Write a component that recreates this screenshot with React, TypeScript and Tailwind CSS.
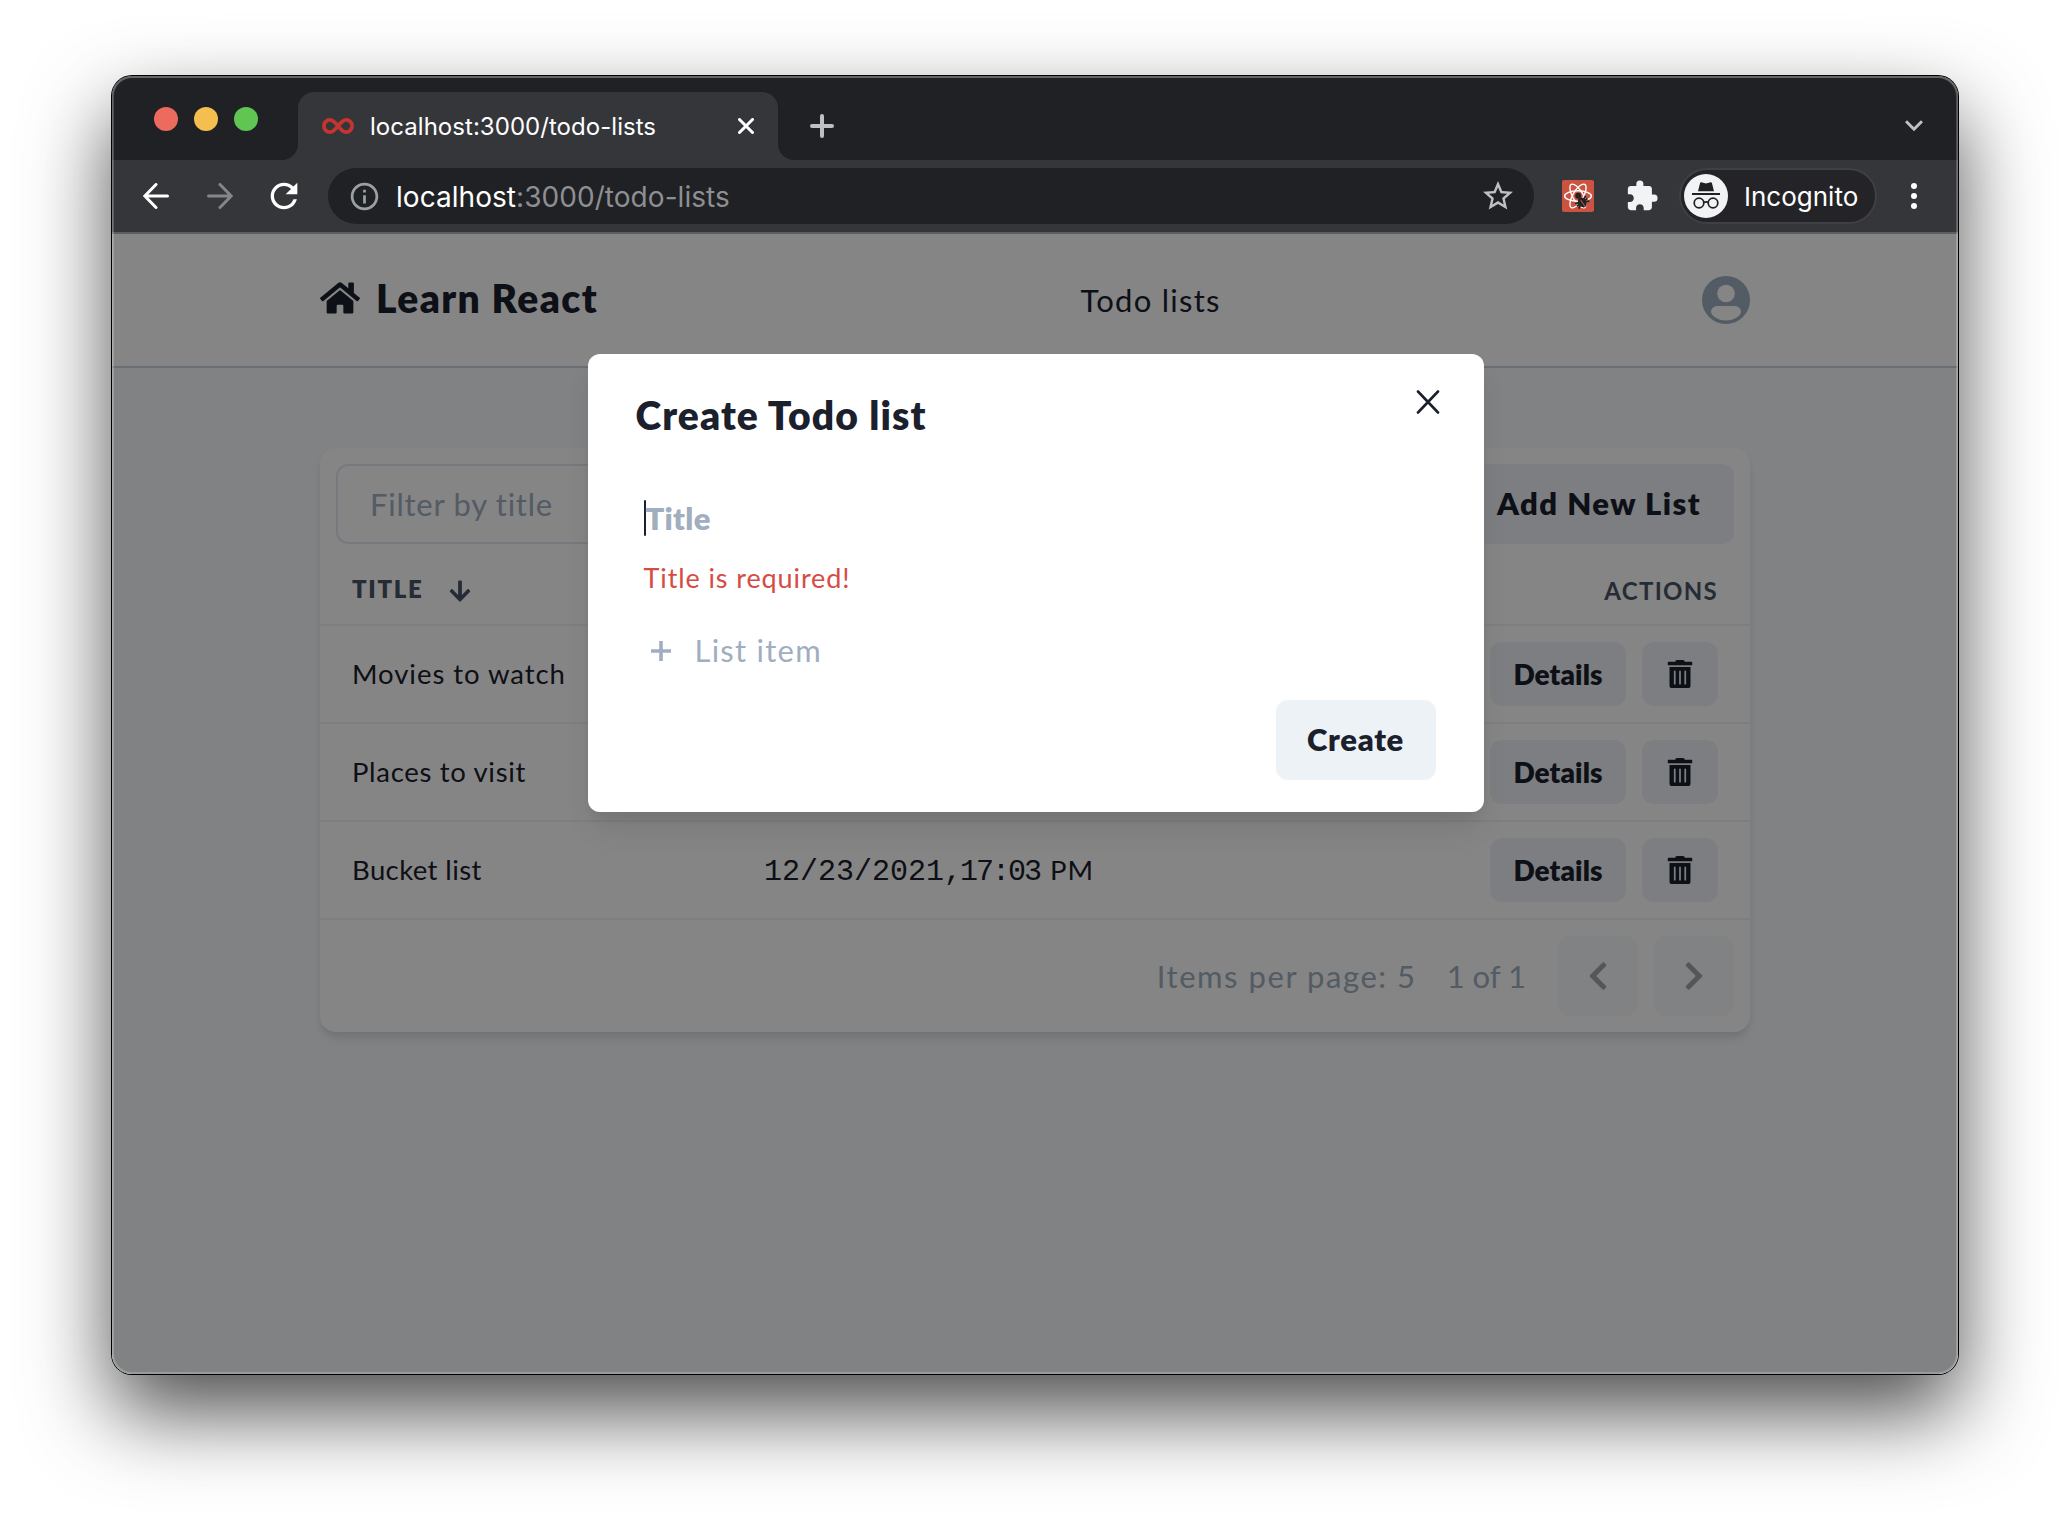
import type { ReactNode } from "react";
import { FaArrowDown, FaChevronLeft, FaChevronRight, FaHome, FaTrashAlt } from "react-icons/fa";
import { MdExtension, MdInfoOutline, MdRefresh, MdStarBorder } from "react-icons/md";

function TrafficLights() {
  return (
    <div className="flex gap-4">
      <span className="size-6 rounded-full bg-[#ec6a5e]" />
      <span className="size-6 rounded-full bg-[#f4bf4f]" />
      <span className="size-6 rounded-full bg-[#61c554]" />
    </div>
  );
}

function TabStrip() {
  return (
    <div className="flex h-[84px] bg-[#35363a]">
      <div className="w-[186px] rounded-br-2xl bg-[#202124] pl-[42px] pt-[31px]">
        <TrafficLights />
      </div>
      <div className="w-[480px] bg-[#202124] pt-4">
        <div className="flex h-[68px] items-center rounded-t-2xl bg-[#35363a] pl-6 pr-6">
          <svg width="32" height="16" viewBox="0 0 32 16" fill="none" stroke="#c5352f" strokeWidth="3.8">
            <path d="M16 8C13.200 4.600 11.200 1.900 8 1.900a6.100 6.100 0 0 0 0 12.200c3.200 0 5.200-2.700 8-6.100s4.800-6.100 8-6.100a6.100 6.100 0 0 1 0 12.200c-3.200 0-5.200-2.700-8-6.100z" />
          </svg>
          <span className="ml-[16px] mt-px text-2xl leading-none tracking-[0.04px] text-white">localhost:3000/todo-lists</span>
          <svg className="ml-auto" width="16" height="16" viewBox="0 0 16 16" stroke="#fff" strokeWidth="3" strokeLinecap="round">
            <path d="M1.5 1.5l13 13M14.5 1.5l-13 13" />
          </svg>
        </div>
      </div>
      <div className="flex flex-1 items-center justify-between rounded-bl-2xl bg-[#202124] pl-8 pr-[35px] pt-4">
        <svg width="24" height="24" viewBox="0 0 24 24" stroke="#bdc1c6" strokeWidth="4" strokeLinecap="round">
          <path d="M12 2v20M2 12h20" />
        </svg>
        <svg width="18" height="12" viewBox="0 0 18 12" fill="none" stroke="#bdc1c6" strokeWidth="3">
          <path d="M1 1.2l8 8 8-8" />
        </svg>
      </div>
    </div>
  );
}

function DevtoolsIcon() {
  return (
    <svg width="32" height="32" viewBox="0 0 32 32" fill="none">
      <rect width="32" height="32" rx="2" fill="#cb5340" />
      <g stroke="#fff" strokeWidth="1.4">
        <ellipse cx="16" cy="16" rx="13.4" ry="5.2" />
        <ellipse cx="16" cy="16" rx="13.4" ry="5.2" transform="rotate(60 16 16)" />
        <ellipse cx="16" cy="16" rx="13.4" ry="5.2" transform="rotate(120 16 16)" />
      </g>
      <circle cx="16.200" cy="15.800" r="3" fill="#222" />
      <g transform="rotate(-35 20 22)">
        <ellipse cx="20" cy="22.500" rx="3.900" ry="5.400" fill="#222" />
        <path d="M13.500 19l13 6.500M26.500 19l-13 6.500M13.500 22.300h13" stroke="#222" strokeWidth="1.800" />
        <path d="M20 19.500v8.500" stroke="#cb5340" strokeWidth="1" />
      </g>
    </svg>
  );
}

function IncognitoAvatar() {
  return (
    <svg width="44" height="44" viewBox="0 0 44 44" fill="none">
      <circle cx="22" cy="22" r="22" fill="#f1f3f4" />
      <path d="M17.3 8.2l4.7 1.3 4.7-1.3c.6-.1 1 .2 1.200.7l2.100 8.400H14l2.100-8.400c.2-.5.6-.8 1.200-.7z" fill="#202124" />
      <path d="M8 20h28" stroke="#202124" strokeWidth="1.800" />
      <circle cx="15" cy="29" r="4.800" stroke="#202124" strokeWidth="1.700" />
      <circle cx="29" cy="29" r="4.800" stroke="#202124" strokeWidth="1.700" />
      <path d="M19.800 28.500q2.200-1.400 4.400 0" stroke="#202124" strokeWidth="1.700" />
    </svg>
  );
}

function Toolbar() {
  return (
    <div className="flex h-[74px] items-center border-b-2 border-[#5d5e62] bg-[#35363a] pl-[31px] pr-[41px]">
      <svg width="26" height="26" viewBox="0 0 26 26" fill="none" stroke="#fff" strokeWidth="3" strokeLinecap="round">
        <path d="M24.500 13H2M13 1.500L1.800 13 13 24.500" />
      </svg>
      <svg className="ml-[38px]" width="26" height="26" viewBox="0 0 26 26" fill="none" stroke="#85868a" strokeWidth="3" strokeLinecap="round">
        <path d="M1.500 13H24M13 1.500L24.200 13 13 24.500" />
      </svg>
      <MdRefresh size={40} className="ml-[31px] text-white" />
      <div className="ml-6 flex h-14 w-[1206px] items-center rounded-full bg-[#202124] pl-5 pr-[18px]">
        <MdInfoOutline size={33} className="text-[#9aa0a6]" />
        <span className="ml-[15px] mt-px text-[28px] leading-none tracking-[0.05px] text-[#8e8f92]">
          <span className="text-white">localhost</span>:3000/todo-lists
        </span>
        <MdStarBorder size={36} className="ml-auto text-[#bdc1c6]" />
      </div>
      <div className="ml-7">
        <DevtoolsIcon />
      </div>
      <MdExtension size={34} className="ml-[31px] text-[#f1f3f4]" />
      <div className="ml-[20px] flex h-14 w-[198px] items-center rounded-full border-2 border-[#3f4045] bg-[#242328] pl-[3px]">
        <IncognitoAvatar />
        <span className="ml-4 mt-px text-[26px] leading-none text-white">Incognito</span>
      </div>
      <div className="ml-auto flex flex-col gap-1">
        <span className="size-1.5 rounded-full bg-white" />
        <span className="size-1.5 rounded-full bg-white" />
        <span className="size-1.5 rounded-full bg-white" />
      </div>
    </div>
  );
}

function AccountIcon() {
  return (
    <svg width="48" height="48" viewBox="0 0 48 48">
      <circle cx="24" cy="24" r="24" fill="#a0aec0" />
      <circle cx="24" cy="17.500" r="8.800" fill="#fff" />
      <path d="M15 30h18a6 6 0 0 1 6 6c0 3.500-7 8.600-15 8.600S9 39.500 9 36a6 6 0 0 1 6-6z" fill="#fff" />
    </svg>
  );
}

function Header() {
  return (
    <header className="flex h-[134px] items-center justify-between border-b-2 border-[#cbd5e0] bg-white px-[208px]">
      <div className="flex w-[278px] items-center pb-1">
        <FaHome size={40} className="shrink-0" />
        <span className="ml-4 whitespace-nowrap text-[39px] font-extrabold leading-none tracking-[1.4px]">Learn React</span>
      </div>
      <span className="w-[139px] whitespace-nowrap text-[31px] leading-none tracking-[1.25px]">Todo lists</span>
      <AccountIcon />
    </header>
  );
}

function GrayButton({ className, children }: { className: string; children: ReactNode }) {
  return (
    <button className={`flex shrink-0 items-center justify-center rounded-xl bg-[#edf2f7] font-extrabold leading-none ${className}`}>
      {children}
    </button>
  );
}

const lists = [
  { title: "Movies to watch", tracking: "tracking-[0.95px]" },
  { title: "Places to visit", tracking: "tracking-[0.68px]" },
  { title: "Bucket list", tracking: "tracking-[0.4px]", date: "12/23/2021,", time: "17:03" },
];

function ListsCard() {
  return (
    <section className="mx-[208px] mt-20 rounded-2xl bg-white shadow-[0_8px_12px_-2px_rgba(0,0,0,0.1),0_4px_8px_-2px_rgba(0,0,0,0.06)]">
      <div className="flex justify-between px-4 pt-4">
        <div className="flex h-20 w-[680px] items-center rounded-xl border-2 border-[#e2e8f0] pl-8 text-[31px] leading-none tracking-[0.75px] text-[#a0aec0]">
          Filter by title
        </div>
        <GrayButton className="h-20 w-[270px] pb-0.5 text-[31px] tracking-[1.45px]">Add New List</GrayButton>
      </div>
      <div className="flex h-[82px] items-center justify-between border-b-2 border-[#edf2f7] pl-8 pr-8 pt-2.5 text-2xl font-bold leading-none text-[#4a5568]">
        <div className="flex items-center">
          <span className="font-extrabold tracking-[1.7px]">TITLE</span>
          <FaArrowDown size={24} className="ml-6 mt-1" />
        </div>
        <span className="pt-1 tracking-[1.3px]">ACTIONS</span>
      </div>
      {lists.map((list) => (
        <div key={list.title} className="flex h-[98px] items-center border-b-2 border-[#edf2f7] px-8 text-[27.5px] leading-none">
          <span className={`w-[412px] ${list.tracking}`}>{list.title}</span>
          {list.date && (
            <span className="flex items-baseline pt-0.5">
              <span className="font-['Liberation_Mono',monospace] text-[30px]">{list.date}</span>
              <span className="-ml-[2px] font-['Liberation_Mono',monospace] text-[30px] tracking-[-2px]">{list.time}</span>
              <span className="ml-[10px] tracking-[1px]">PM</span>
            </span>
          )}
          <div className="ml-auto flex gap-4">
            <GrayButton className="h-16 w-[136px] text-[28px] tracking-[0.1px]">Details</GrayButton>
            <GrayButton className="h-16 w-[76px]">
              <FaTrashAlt size={28} />
            </GrayButton>
          </div>
        </div>
      ))}
      <div className="flex items-center justify-end p-4 text-[31px] leading-none text-[#a0aec0]">
        <span className="tracking-[1.55px]">Items per page: 5</span>
        <span className="ml-[30px]">1 of 1</span>
        <GrayButton className="ml-8 size-20 text-[#1a202c] opacity-40">
          <FaChevronLeft size={32} />
        </GrayButton>
        <GrayButton className="ml-4 size-20 text-[#1a202c] opacity-40">
          <FaChevronRight size={32} />
        </GrayButton>
      </div>
    </section>
  );
}

function CreateDialog() {
  return (
    <div className="relative ml-px flex h-[458px] w-[896px] flex-col rounded-xl bg-white px-12 pt-8 shadow-[0_20px_30px_-6px_rgba(0,0,0,0.1),0_8px_12px_-4px_rgba(0,0,0,0.05)]">
      <button className="absolute right-11 top-9">
        <svg width="24" height="24" viewBox="0 0 24 24" stroke="#1a202c" strokeWidth="2.600" strokeLinecap="round">
          <path d="M2 1.500l20 21M22 1.500l-20 21" />
        </svg>
      </button>
      <h2 className="flex h-[58px] items-center text-[39px] font-extrabold leading-none tracking-[1.1px]">Create Todo list</h2>
      <div className="mt-14 flex h-9 items-center pl-2 text-[31px] font-extrabold leading-none tracking-[0.3px] text-[#a0aec0]">
        <span className="h-9 w-0.5 rounded-full bg-[#1a202c]" />
        Title
      </div>
      <p className="mt-[23px] flex h-9 items-center pl-2 text-[27px] leading-none tracking-[0.9px] text-[#d64c45]">Title is required!</p>
      <div className="mt-[37px] flex h-9 items-center pl-[15px] text-[31px] leading-none tracking-[1.25px] text-[#a0aec0]">
        <svg className="mt-0.5" width="20" height="20" viewBox="0 0 20 20" stroke="#a0aec0" strokeWidth="3.600">
          <path d="M10 0v20M0 10h20" />
        </svg>
        <span className="ml-6">List item</span>
      </div>
      <GrayButton className="ml-auto mt-8 h-20 w-40 pb-0.5 text-[31px] tracking-[0.7px]">Create</GrayButton>
    </div>
  );
}

export default function App() {
  return (
    <div className="h-[1522px] w-[2070px] overflow-hidden bg-white pl-28 pt-[76px]">
      <div className="relative h-[1298px] w-[1846px] rounded-[20px] shadow-[0_0_0_1px_#000,0_38px_84px_rgba(0,0,0,0.7)]">
        <div className="h-full overflow-hidden rounded-[20px] font-['Inter',sans-serif]">
          <TabStrip />
          <Toolbar />
          <main className="relative h-[1140px] bg-[#f7fafc] font-['Lato',sans-serif] text-[#1a202c]">
            <Header />
            <ListsCard />
            <div className="absolute inset-0 flex items-start justify-center bg-black/48 pt-[120px]">
              <CreateDialog />
            </div>
          </main>
        </div>
        <div className="pointer-events-none absolute inset-0 rounded-[20px] shadow-[inset_0_0_0_2px_rgba(255,255,255,0.2),inset_0_1px_0_1px_rgba(255,255,255,0.14)]" />
      </div>
    </div>
  );
}
